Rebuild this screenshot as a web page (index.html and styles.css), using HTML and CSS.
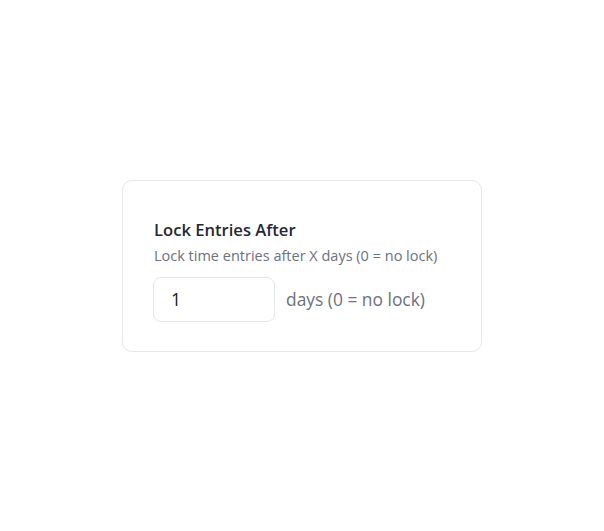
FILE: index.html
```html
<!DOCTYPE html>
<html>
<head>
<meta charset="utf-8">
<link rel="stylesheet" href="styles.css">
</head>
<body>
<main class="page">
  <section class="card">
    <h2 class="title">Lock Entries After</h2>
    <p class="desc">Lock time entries after X days (0 = no lock)</p>
    <div class="row">
      <input class="num" type="text" value="1">
      <span class="unit">days (0 = no lock)</span>
    </div>
  </section>
</main>
</body>
</html>
```

FILE: styles.css
```css
html, body {
  margin: 0;
  padding: 0;
  background: #ffffff;
}
.page {
  width: 604px;
  height: 531px;
  display: flex;
  align-items: center;
  justify-content: center;
  font-family: "Open Sans", "Noto Sans", sans-serif;
}
.card {
  box-sizing: border-box;
  width: 360px;
  border: 1px solid #e5e7eb;
  border-radius: 10px;
  padding: 37px 31px 29px 30px;
  background: #fff;
}
.title {
  margin: 0 0 0 1px;
  font-size: 16.6px;
  font-weight: 600;
  color: #1f2937;
  line-height: 24px;
}
.desc {
  margin: 4px 0 11px 1px;
  font-size: 14.5px;
  color: #6b7280;
  line-height: 20px;
}
.row {
  display: flex;
  align-items: center;
  gap: 11px;
}
.num {
  box-sizing: border-box;
  width: 122px;
  height: 45px;
  border: 1px solid #e5e7eb;
  border-radius: 8px;
  padding: 0 17px;
  font-family: inherit;
  font-size: 17.5px;
  color: #111827;
  outline: none;
  background: #fff;
}
.unit {
  font-size: 17.4px;
  color: #6b7280;
}
```
